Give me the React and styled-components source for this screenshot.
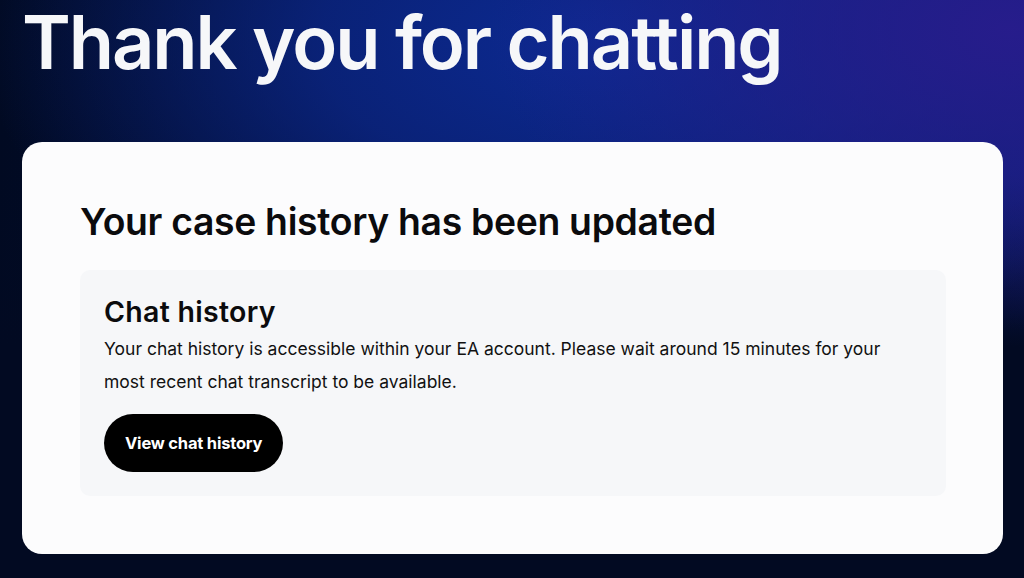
import React from "react"
import styled, { createGlobalStyle } from "styled-components"

const GlobalStyle = createGlobalStyle`
  html, body {
    margin: 0;
    padding: 0;
    height: 578px;
    overflow: hidden;
    background: #020a22;
  }
  * {
    box-sizing: border-box;
  }
`

const Page = styled.div`
  width: 1024px;
  height: 578px;
  padding: 0 21px 0 22px;
  font-family: Inter, "Noto Sans", sans-serif;
  background:
    radial-gradient(ellipse 520px 300px at 1010px 30px, rgba(40, 28, 140, 0.95) 0%, rgba(40, 28, 140, 0.5) 50%, rgba(40, 28, 140, 0) 100%),
    radial-gradient(ellipse 620px 330px at 600px 40px, #0c2a92 0%, rgba(12, 40, 140, 0.75) 45%, rgba(8, 28, 100, 0) 100%),
    linear-gradient(180deg, rgba(2, 10, 34, 0) 0%, rgba(2, 10, 34, 0) 30%, #020a22 60%),
    linear-gradient(90deg, #010a22 0%, #04124a 60%, #0d1c70 100%);
`

const Title = styled.h1`
  margin: 0;
  color: #f6f7f9;
  font-size: 74px;
  line-height: 84px;
  font-weight: 600;
  letter-spacing: -2.1px;
  white-space: nowrap;
`

const Card = styled.section`
  margin-top: 58px;
  background: #fcfcfd;
  border-radius: 20px;
  padding: 58px 57px 58px 58px;
`

const Heading = styled.h2`
  margin: 0 0 26px;
  color: #0b0b0d;
  font-size: 37.3px;
  line-height: 44px;
  font-weight: 600;
  letter-spacing: -0.3px;
`

const Panel = styled.div`
  background: #f6f7f9;
  border-radius: 10px;
  padding: 24px;
`

const PanelTitle = styled.h3`
  margin: 0 0 2px;
  color: #0b0b0d;
  font-size: 28.5px;
  line-height: 36px;
  font-weight: 600;
  letter-spacing: 0.3px;
`

const Body = styled.p`
  margin: 0 0 16px;
  color: #111;
  font-size: 17.5px;
  line-height: 33px;
  font-weight: 400;
`

const Button = styled.button`
  height: 58px;
  padding: 0 21px;
  border: none;
  border-radius: 29px;
  background: #000;
  color: #fff;
  font-family: inherit;
  font-size: 16.5px;
  font-weight: 700;
  letter-spacing: -0.2px;
  cursor: pointer;
`

export default function App() {
  return (
    <>
      <GlobalStyle />
      <Page>
        <Title>Thank you for chatting</Title>
        <Card>
          <Heading>Your case history has been updated</Heading>
          <Panel>
            <PanelTitle>Chat history</PanelTitle>
            <Body>
              Your chat history is accessible within your EA account. Please wait around 15 minutes for your most
              recent chat transcript to be available.
            </Body>
            <Button>View chat history</Button>
          </Panel>
        </Card>
      </Page>
    </>
  )
}
